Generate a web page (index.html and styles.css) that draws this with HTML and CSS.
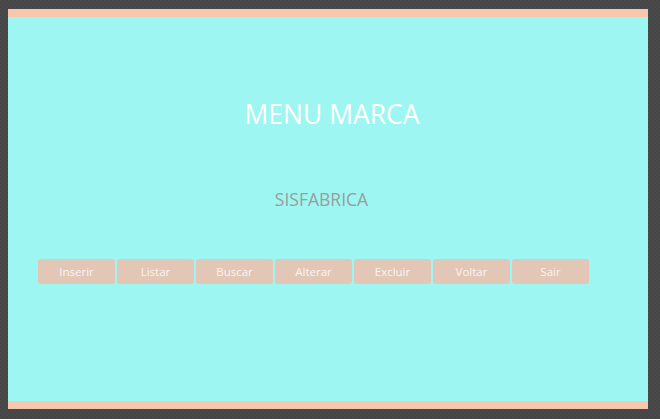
FILE: index.html
```html
<!DOCTYPE html>
<html lang="pt">
<head>
<meta charset="utf-8">
<title>Menu Marca</title>
<link rel="stylesheet" href="styles.css">
</head>
<body>
<div class="panel">
  <h1 class="title">MENU MARCA</h1>
  <p class="subtitle">SISFABRICA</p>
  <div class="buttons">
    <button class="btn">Inserir</button>
    <button class="btn">Listar</button>
    <button class="btn">Buscar</button>
    <button class="btn">Alterar</button>
    <button class="btn">Excluir</button>
    <button class="btn">Voltar</button>
    <button class="btn">Sair</button>
  </div>
</div>
</body>
</html>
```

FILE: styles.css
```css
html, body {
  margin: 0;
  padding: 0;
}
body {
  background-color: #4a4a4a;
  background-image:
    linear-gradient(45deg, #454545 25%, transparent 25%, transparent 75%, #454545 75%),
    linear-gradient(45deg, #454545 25%, transparent 25%, transparent 75%, #454545 75%);
  background-size: 4px 4px;
  background-position: 0 0, 2px 2px;
  height: 419px;
  overflow: hidden;
  font-family: "Open Sans", "Noto Sans", sans-serif;
  padding-top: 9px;
  box-sizing: border-box;
}
.panel {
  margin-left: 8px;
  width: 640px;
  height: 400px;
  box-sizing: border-box;
  background: #9df6f2;
  border-top: 8px solid #f7c8ae;
  border-bottom: 8px solid #f7c8ae;
  display: flex;
  flex-direction: column;
  align-items: center;
}
.title {
  margin: 79px 0 0 8px;
  font-weight: 400;
  font-size: 26.5px;
  line-height: 36px;
  color: #ffffff;
}
.subtitle {
  margin: 55px 0 0 -13px;
  font-size: 17.5px;
  line-height: 24px;
  color: #9a9d9d;
}
.buttons {
  align-self: flex-start;
  margin: 48px 0 0 30px;
  display: flex;
  gap: 2px;
}
.btn {
  width: 77px;
  height: 25px;
  border: none;
  border-radius: 3px;
  background: #e2c6b6;
  color: #fbf4f0;
  font-family: "Open Sans", "Noto Sans", sans-serif;
  font-size: 11.5px;
  padding: 0;
}
```
